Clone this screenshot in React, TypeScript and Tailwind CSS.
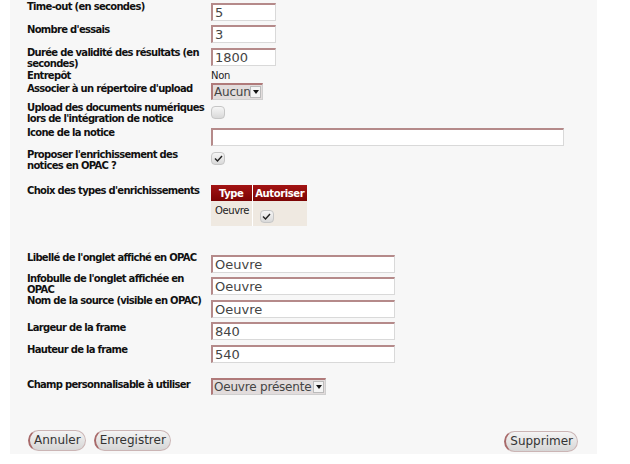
const label = "w-[184px] shrink-0 pr-[3px] text-[10px] leading-[11px] tracking-[-0.7px] font-bold text-[#111]";
const inputCls =
  "block h-[18px] bg-white border-t-2 border-l-2 border-r border-b border-t-[#b58a8a] border-l-[#b58a8a] border-r-[#d9d9d9] border-b-[#d9d9d9] px-[2px] text-[13px] leading-[14px] text-[#444] outline-none";

function TextInput({ value, w, mt }: { value: string; w: string; mt: string }) {
  return <input readOnly value={value} className={`${inputCls} ${w} ${mt}`} />;
}

function Select({ value, w, mt }: { value: string; w: string; mt: string }) {
  return (
    <div
      className={`flex h-[17px] items-stretch bg-[#e2dcdc] border-t-2 border-l-2 border-t-[#b07a7a] border-l-[#b07a7a] border-r border-b border-r-[#cfcfcf] border-b-[#cfcfcf] ${w} ${mt}`}
    >
      <span className="flex-1 pl-[1px] text-[12px] leading-[14px] tracking-[-0.2px] text-[#444] whitespace-nowrap overflow-hidden">
        {value}
      </span>
      <span className="my-[1px] mr-[1px] flex w-[11px] items-center justify-center bg-[#f4f4f4] border border-[#bbb]">
        <svg width="6" height="4" viewBox="0 0 6 4">
          <path d="M0 0h6L3 4z" fill="#111" />
        </svg>
      </span>
    </div>
  );
}

function Check({ checked, mt }: { checked?: boolean; mt: string }) {
  return (
    <div
      className={`flex h-[13px] w-[14px] items-center justify-center rounded-[4px] border border-[#c6c6c6] bg-gradient-to-b from-[#f6f6f6] to-[#d9d9d9] ${mt}`}
    >
      {checked && (
        <svg width="9" height="7" viewBox="0 0 9 7">
          <path d="M1 3.5l2.5 2.5L8 1" stroke="#222" strokeWidth="1.4" fill="none" />
        </svg>
      )}
    </div>
  );
}

function Button({ children }: { children: string }) {
  return (
    <button className="h-[21px] rounded-full border border-[#cbb5b5] border-l-2 border-l-[#a86a6a] bg-gradient-to-b from-[#f4f4f4] to-[#d6d6d6] px-[4px] text-[12px] leading-[15px] text-[#333]">
      {children}
    </button>
  );
}

export default function App() {
  return (
    <div
      className="h-[464px] w-[630px] bg-white"
      style={{ fontFamily: '"DejaVu Sans", sans-serif' }}
    >
      <div className="ml-[10px] h-[454px] w-[587px] bg-[#f7f7f7] pl-[17px] pt-[1px]">
        <div className="flex h-[23px]">
          <div className={label}>Time-out (en secondes)</div>
          <TextInput value="5" w="w-[65px]" mt="mt-[2px]" />
        </div>
        <div className="flex h-[23px]">
          <div className={label}>Nombre d'essais</div>
          <TextInput value="3" w="w-[65px]" mt="mt-[1px]" />
        </div>
        <div className="flex h-[23px]">
          <div className={label}>Durée de validité des résultats (en secondes)</div>
          <TextInput value="1800" w="w-[65px]" mt="mt-[1px]" />
        </div>
        <div className="flex h-[13px]">
          <div className={label}>Entrepôt</div>
          <span className="text-[10px] leading-[11px] tracking-[-0.3px] text-[#222]">Non</span>
        </div>
        <div className="flex h-[19px]">
          <div className={label}>Associer à un répertoire d'upload</div>
          <Select value="Aucun" w="w-[52px]" mt="mt-0" />
        </div>
        <div className="flex h-[25px]">
          <div className={label}>Upload des documents numériques lors de l'intégration de notice</div>
          <Check mt="mt-[4px]" />
        </div>
        <div className="flex h-[22px]">
          <div className={label}>Icone de la notice</div>
          <TextInput value="" w="w-[353px]" mt="mt-[1px]" />
        </div>
        <div className="flex h-[36px]">
          <div className={label}>Proposer l'enrichissement des notices en OPAC ?</div>
          <Check checked mt="mt-[3px]" />
        </div>
        <div className="flex h-[67px]">
          <div className={label}>Choix des types d'enrichissements</div>
          <table className="h-[41px] w-[96px] border-collapse text-[10px] tracking-[-0.4px]">
            <thead>
              <tr className="h-[16px] bg-gradient-to-b from-[#a31414] to-[#7c0404] text-white">
                <th className="w-[41px] border-r border-white font-bold leading-[15px]">Type</th>
                <th className="font-bold leading-[15px]">Autoriser</th>
              </tr>
            </thead>
            <tbody>
              <tr className="bg-[#efe9e1] align-top">
                <td className="border-r border-white pl-[4px] pt-[4px] leading-[12px] text-[#222]">
                  Oeuvre
                </td>
                <td className="pl-[7px] pt-[9px]">
                  <Check checked mt="mt-0" />
                </td>
              </tr>
            </tbody>
          </table>
        </div>
        <div className="flex h-[21px]">
          <div className={label}>Libellé de l'onglet affiché en OPAC</div>
          <TextInput value="Oeuvre" w="w-[184px]" mt="mt-[3px]" />
        </div>
        <div className="flex h-[22px]">
          <div className={label}>Infobulle de l'onglet affichée en OPAC</div>
          <TextInput value="Oeuvre" w="w-[184px]" mt="mt-[4px]" />
        </div>
        <div className="flex h-[27px]">
          <div className={label}>Nom de la source (visible en OPAC)</div>
          <TextInput value="Oeuvre" w="w-[184px]" mt="mt-[5px]" />
        </div>
        <div className="flex h-[22px]">
          <div className={label}>Largeur de la frame</div>
          <TextInput value="840" w="w-[184px]" mt="mt-0" />
        </div>
        <div className="flex h-[35px]">
          <div className={label}>Hauteur de la frame</div>
          <TextInput value="540" w="w-[184px]" mt="mt-[1px]" />
        </div>
        <div className="flex h-[49px]">
          <div className={label}>Champ personnalisable à utiliser</div>
          <Select value="Oeuvre présente" w="w-[115px]" mt="-mt-[1px]" />
        </div>
        <div className="flex items-center pr-[19px]">
          <div className="ml-[1px] flex gap-[8px]">
            <Button>Annuler</Button>
            <Button>Enregistrer</Button>
          </div>
          <div className="ml-auto">
            <Button>Supprimer</Button>
          </div>
        </div>
      </div>
    </div>
  );
}
